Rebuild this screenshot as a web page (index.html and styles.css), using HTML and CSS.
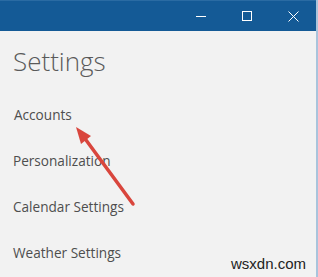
FILE: index.html
```html
<!DOCTYPE html>
<html lang="en">
<head>
    <meta charset="UTF-8">
    <title>Settings</title>
    <link rel="stylesheet" href="styles.css">
</head>
<body>
    <div class="window">
        <div class="titlebar">
            <button class="caption-btn" aria-label="Minimize">
                <svg width="10" height="10" viewBox="0 0 10 10"><path d="M0 5.5H10" stroke="#fff" stroke-width="1"/></svg>
            </button>
            <button class="caption-btn" aria-label="Maximize">
                <svg width="10" height="10" viewBox="0 0 10 10"><rect x="0.5" y="0.5" width="9" height="9" fill="none" stroke="#fff" stroke-width="1"/></svg>
            </button>
            <button class="caption-btn" aria-label="Close">
                <svg width="11" height="11" viewBox="0 0 11 11"><path d="M0.5 0.5L10.5 10.5M10.5 0.5L0.5 10.5" stroke="#fff" stroke-width="1"/></svg>
            </button>
        </div>

        <div class="content">
            <h1 class="page-title">Settings</h1>
            <ul class="menu">
                <li>Accounts</li>
                <li>Personalization</li>
                <li>Calendar Settings</li>
                <li>Weather Settings</li>
            </ul>
        </div>

        <!-- annotation arrow pointing at Accounts -->
        <svg class="annotation" width="318" height="277" viewBox="0 0 318 277">
            <path d="M133 204L86 140" stroke="#d9463d" stroke-width="3.5" stroke-linecap="round"/>
            <path d="M76 127L91 136L81 144Z" fill="#d9463d"/>
        </svg>

        <div class="watermark">wsxdn.com</div>
    </div>
</body>
</html>
```

FILE: styles.css
```css
body {
    margin: 0;
    background: #f2f2f2;
}
.window {
    position: relative;
    width: 316px;
    height: 277px;
    background: #f2f2f2;
    border-right: 2px solid #a9c4dc;
    font-family: "Open Sans", "Noto Sans", sans-serif;
    overflow: hidden;
}
.titlebar {
    height: 31px;
    background: #145a96;
    border-top: 1px solid #2a6ba3;
    box-sizing: border-box;
    display: flex;
    justify-content: flex-end;
}
.caption-btn {
    width: 46px;
    height: 30px;
    border: 0;
    padding: 0;
    background: transparent;
    display: flex;
    align-items: center;
    justify-content: center;
}
.content {
    padding: 12px 0 0 13px;
}
.page-title {
    margin: 0;
    font-size: 26px;
    font-weight: 300;
    line-height: 36px;
    color: #5a5a5a;
}
.menu {
    list-style: none;
    margin: 0;
    padding: 0;
}
.menu li {
    font-size: 13.6px;
    line-height: 20px;
    color: #4e4e4e;
    margin-top: 26px;
}
.menu li:first-child {
    padding-left: 1px;
}
.annotation {
    position: absolute;
    left: 0;
    top: 0;
    pointer-events: none;
}
.watermark {
    position: absolute;
    right: 10px;
    bottom: 5px;
    font-family: "Liberation Sans", Arial, sans-serif;
    font-size: 15px;
    color: #222;
}
```
